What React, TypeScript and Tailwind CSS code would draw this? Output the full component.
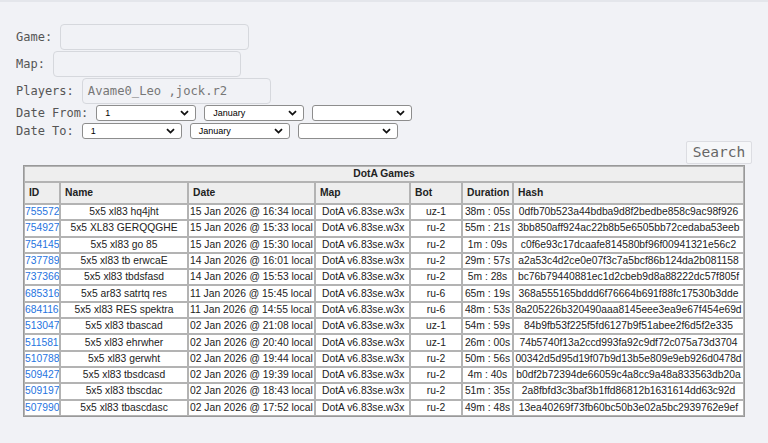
import React from "react";

const rows: string[][] = [
  ["755572", "5x5 xl83 hq4jht", "15 Jan 2026 @ 16:34 local", "uz-1", "38m : 05s", "0dfb70b523a44bdba9d8f2bedbe858c9ac98f926"],
  ["754927", "5x5 XL83 GERQQGHE", "15 Jan 2026 @ 15:33 local", "ru-2", "55m : 21s", "3bb850aff924ac22b8b5e6505bb72cedaba53eeb"],
  ["754145", "5x5 xl83 go 85", "15 Jan 2026 @ 15:30 local", "ru-2", "1m : 09s", "c0f6e93c17dcaafe814580bf96f00941321e56c2"],
  ["737789", "5x5 xl83 tb erwcaE", "14 Jan 2026 @ 16:01 local", "ru-2", "29m : 57s", "a2a53c4d2ce0e07f3c7a5bcf86b124da2b081158"],
  ["737366", "5x5 xl83 tbdsfasd", "14 Jan 2026 @ 15:53 local", "ru-2", "5m : 28s", "bc76b79440881ec1d2cbeb9d8a88222dc57f805f"],
  ["685316", "5x5 ar83 satrtq res", "11 Jan 2026 @ 15:45 local", "ru-6", "65m : 19s", "368a555165bddd6f76664b691f88fc17530b3dde"],
  ["684116", "5x5 xl83 RES spektra", "11 Jan 2026 @ 14:55 local", "ru-6", "48m : 53s", "8a205226b320490aaa8145eee3ea9e67f454e69d"],
  ["513047", "5x5 xl83 tbascad", "02 Jan 2026 @ 21:08 local", "uz-1", "54m : 59s", "84b9fb53f225f5fd6127b9f51abee2f6d5f2e335"],
  ["511581", "5x5 xl83 ehrwher", "02 Jan 2026 @ 20:40 local", "uz-1", "26m : 00s", "74b5740f13a2ccd993fa92c9df72c075a73d3704"],
  ["510788", "5x5 xl83 gerwht", "02 Jan 2026 @ 19:44 local", "ru-2", "50m : 56s", "00342d5d95d19f07b9d13b5e809e9eb926d0478d"],
  ["509427", "5x5 xl83 tbsdcasd", "02 Jan 2026 @ 19:39 local", "ru-2", "4m : 40s", "b0df2b72394de66059c4a8cc9a48a833563db20a"],
  ["509197", "5x5 xl83 tbscdac", "02 Jan 2026 @ 18:43 local", "ru-2", "51m : 35s", "2a8fbfd3c3baf3b1ffd86812b1631614dd63c92d"],
  ["507990", "5x5 xl83 tbascdasc", "02 Jan 2026 @ 17:52 local", "ru-2", "49m : 48s", "13ea40269f73fb60bc50b3e02a5bc2939762e9ef"],
];

function Chevron() {
  return (
    <svg width="9" height="6" viewBox="0 0 9 6" className="shrink-0">
      <path d="M1 1.2 L4.5 4.6 L8 1.2" fill="none" stroke="#111" strokeWidth="1.8" />
    </svg>
  );
}

function FakeSelect({ text }: { text: string }) {
  return (
    <div className="flex h-[16px] w-[100px] items-center justify-between rounded-[3px] border border-[#8d8d8d] bg-white pl-[8px] pr-[6px]">
      <span className="text-[9px] leading-none text-black [font-family:'Liberation_Sans',Arial,sans-serif]">{text}</span>
      <Chevron />
    </div>
  );
}

const mono = "[font-family:'DejaVu_Sans_Mono',monospace]";

export default function App() {
  const th = "border border-[#b3b3b3] bg-[#eeeeee] text-left pl-[4px] font-bold h-[22px]";
  const td = "border border-[#b3b3b3] bg-white h-[16.3px] leading-[14px] whitespace-nowrap overflow-hidden";
  return (
    <div className="min-h-screen bg-[#f1f2f6] text-[#555]">
      <div className="h-[2px] bg-[#e4e6eb]" />
      <div className="pt-[22px]">
        <div className="flex flex-col gap-[1px]">
          <div className="flex items-center gap-[8px] pl-[16px]">
            <span className={`${mono} text-[12px] leading-[16px] text-[#555]`}>Game:</span>
            <div className="h-[26px] w-[189px] rounded-[4px] border border-[#d6d8dd] bg-[#f1f2f6]" />
          </div>
          <div className="flex items-center gap-[8px] pl-[16px]">
            <span className={`${mono} text-[12px] leading-[16px] text-[#555]`}>Map:</span>
            <div className="h-[26px] w-[188px] rounded-[4px] border border-[#d6d8dd] bg-[#f1f2f6]" />
          </div>
          <div className="flex items-center gap-[8px] pl-[16px]">
            <span className={`${mono} text-[12px] leading-[16px] text-[#555]`}>Players:</span>
            <div className={`flex h-[26px] w-[189px] items-center rounded-[4px] border border-[#d6d8dd] bg-[#f1f2f6] pl-[5px] ${mono} text-[12.2px] text-[#777]`}>
              Avame0_Leo ,jock.r2
            </div>
          </div>
        </div>
        <div className="mt-[1px] flex items-center gap-[8px] pl-[16px]">
          <span className={`${mono} text-[12px] leading-[16px] text-[#555]`}>Date From:</span>
          <div className="flex gap-[8px]">
            <FakeSelect text="1" />
            <FakeSelect text="January" />
            <FakeSelect text="" />
          </div>
        </div>
        <div className="mt-[2px] flex items-center gap-[8px] pl-[16px]">
          <span className={`${mono} text-[12px] leading-[16px] text-[#555]`}>Date To:</span>
          <div className="flex gap-[8px]">
            <FakeSelect text="1" />
            <FakeSelect text="January" />
            <FakeSelect text="" />
          </div>
        </div>
        <div className="mt-[2px] flex justify-end pr-[16px]">
          <div className={`flex h-[23px] w-[66px] items-center justify-center rounded-[2px] border border-[#dcdde2] bg-[#f6f7f9] ${mono} text-[14.5px] text-[#666]`}>
            Search
          </div>
        </div>
        <div className="mx-[23px] mt-[1px]">
          <table className="w-[722px] table-fixed border-separate border-spacing-0 border border-[#999] text-[10.3px] text-[#222] [font-family:'Liberation_Sans',Arial,sans-serif]">
            <colgroup>
              <col className="w-[36px]" />
              <col className="w-[128px]" />
              <col className="w-[127px]" />
              <col className="w-[95px]" />
              <col className="w-[52px]" />
              <col className="w-[51px]" />
              <col />
            </colgroup>
            <thead>
              <tr>
                <th colSpan={7} className="h-[16px] border border-[#b3b3b3] bg-[#eeeeee] text-center font-bold leading-[12px]">
                  DotA Games
                </th>
              </tr>
              <tr>
                <th className={th}>ID</th>
                <th className={th}>Name</th>
                <th className={th}>Date</th>
                <th className={th}>Map</th>
                <th className={th}>Bot</th>
                <th className={th}>Duration</th>
                <th className={th}>Hash</th>
              </tr>
            </thead>
            <tbody>
              {rows.map((r) => (
                <tr key={r[0]}>
                  <td className={`${td} text-left pl-0`}>
                    <a className="text-[#1f74e0]">{r[0]}</a>
                  </td>
                  <td className={`${td} text-center`}>{r[1]}</td>
                  <td className={`${td} text-left pl-[1px]`}>{r[2]}</td>
                  <td className={`${td} text-left pl-[6px]`}>DotA v6.83se.w3x</td>
                  <td className={`${td} text-center`}>{r[3]}</td>
                  <td className={`${td} text-center`}>{r[4]}</td>
                  <td className={`${td} text-center`}>{r[5]}</td>
                </tr>
              ))}
            </tbody>
          </table>
        </div>
      </div>
    </div>
  );
}
